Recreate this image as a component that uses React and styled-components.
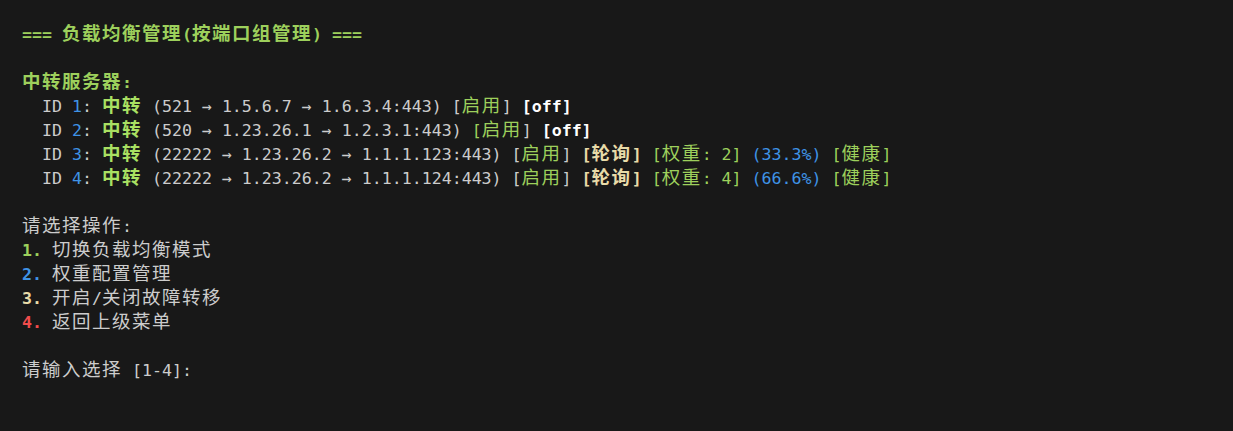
import React from 'react'
import styled, { createGlobalStyle } from 'styled-components'

const GlobalStyle = createGlobalStyle`
  html, body {
    margin: 0;
    padding: 0;
    background: #181818;
  }
`

const colors = {
  text: '#cccccc',
  green: '#9dd05c',
  brightGreen: '#a9e062',
  blue: '#3f93e6',
  beige: '#e8dba8',
  red: '#f14c4c',
  white: '#ffffff',
}

const CJK = /([\u2e80-\u9fff\uff01-\uff5e]+)/

// splits text so that CJK runs take two terminal cells per glyph
const Txt = ({ c = 'text', b, children }) => {
  const parts = String(children).split(CJK)
  return (
    <Seg $c={c} $b={b}>
      {parts.map((p, i) =>
        i % 2 === 1 ? <Wide key={i}>{p}</Wide> : p
      )}
    </Seg>
  )
}

const Line = ({ items = [] }) => (
  <Row>
    {items.length === 0 ? '\u00a0' : items.map((it, i) => (
      <Txt key={i} c={it[1]} b={it[2]}>{it[0]}</Txt>
    ))}
  </Row>
)

const servers = [
  { id: 1, route: '(521 → 1.5.6.7 → 1.6.3.4:443)', off: true, openGreen: false },
  { id: 2, route: '(520 → 1.23.26.1 → 1.2.3.1:443)', off: true, openGreen: true },
  { id: 3, route: '(22222 → 1.23.26.2 → 1.1.1.123:443)', weight: 2, pct: '33.3%' },
  { id: 4, route: '(22222 → 1.23.26.2 → 1.1.1.124:443)', weight: 4, pct: '66.6%' },
]

const serverLine = s => {
  const items = [
    ['  ID '], [String(s.id), 'blue'], [': '], ['中转', 'brightGreen', true],
    [' ' + s.route + ' '],
    ['[', s.openGreen ? 'green' : 'text'], ['启用', 'green'], [']'], [' '],
  ]
  if (s.off) {
    items.push(['[off]', 'white', true])
  } else {
    items.push(
      ['[轮询]', 'beige', true], [' '],
      [`[权重: ${s.weight}]`, 'green'], [' '],
      [`(${s.pct})`, 'blue'], [' '],
      ['[健康]', 'green'],
    )
  }
  return items
}

export default function App() {
  return (
    <>
      <GlobalStyle />
      <Terminal>
        <Line items={[['=== 负载均衡管理(按端口组管理) ===', 'green', true]]} />
        <Line />
        <Line items={[['中转服务器:', 'green', true]]} />
        {servers.map(s => <Line key={s.id} items={serverLine(s)} />)}
        <Line />
        <Line items={[['请选择操作:']]} />
        <Line items={[['1. ', 'green', true], ['切换负载均衡模式']]} />
        <Line items={[['2. ', 'blue', true], ['权重配置管理']]} />
        <Line items={[['3. ', 'beige', true], ['开启/关闭故障转移']]} />
        <Line items={[['4. ', 'red', true], ['返回上级菜单']]} />
        <Line />
        <Line items={[['请输入选择 [1-4]: ']]} />
      </Terminal>
    </>
  )
}

const Terminal = styled.div`
  box-sizing: border-box;
  width: 1233px;
  min-height: 431px;
  padding: 20px 22px;
  background: #181818;
  color: #cccccc;
  font-family: "DejaVu Sans Mono", monospace;
  font-size: 16.6px;
  line-height: 24px;
  white-space: pre;
`

const Row = styled.div`
  height: 24px;
`

const Seg = styled.span`
  color: ${p => colors[p.$c]};
  font-weight: ${p => (p.$b ? 700 : 400)};
`

const Wide = styled.span`
  font-family: "Noto Sans CJK SC", sans-serif;
  font-size: 18.5px;
  letter-spacing: 1.5px;
`
